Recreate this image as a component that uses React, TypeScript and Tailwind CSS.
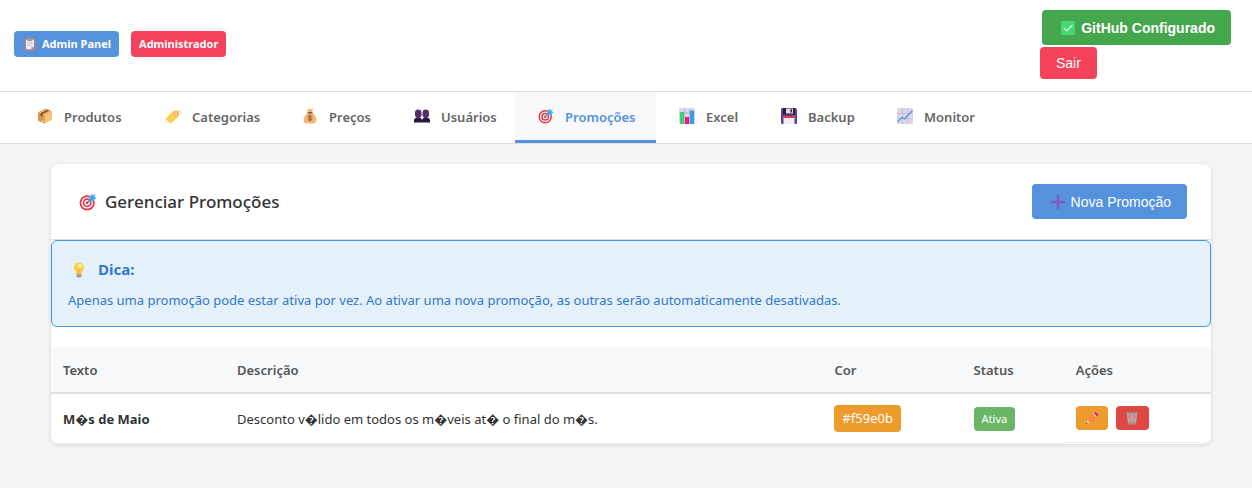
import type { ReactNode } from "react";

type IconProps = { className?: string };

function Svg({ className = "size-4", children }: { className?: string; children: ReactNode }) {
  return (
    <svg viewBox="0 0 32 32" className={`${className} shrink-0`} fill="none" aria-hidden="true">
      {children}
    </svg>
  );
}

const Clipboard = ({ className }: IconProps) => (
  <Svg className={className}>
    <rect x="4" y="3" width="24" height="28" rx="2" fill="#b5846c" />
    <path d="M7 6h18v16l-6 6H7z" fill="#f3eef8" />
    <path d="M25 22h-6v6z" fill="#b8a8cc" />
    <path d="M10 12h12M10 16h12M10 20h8" stroke="#b9b0c6" strokeWidth="1.6" />
    <path d="M11 4h3a2 2 0 0 1 4 0h3v5H11z" fill="#9b9b9b" />
  </Svg>
);

const Check = ({ className }: IconProps) => (
  <Svg className={className}>
    <rect x="0" y="0" width="32" height="32" rx="3" fill="#46d873" />
    <path d="M7 16.5l6 6L25.5 10" stroke="#fff" strokeWidth="2.6" strokeLinecap="round" strokeLinejoin="round" />
  </Svg>
);

const Box = ({ className }: IconProps) => (
  <Svg className={className}>
    <path d="M2 9L17 1l13 6v16L15 31 2 25z" fill="#e7a55a" />
    <path d="M15 14L30 7v16l-15 8z" fill="#f8c67b" />
    <path d="M2 9l13 5v17L2 25z" fill="#df9650" />
    <path d="M2 9L17 1l13 6-15 7z" fill="#f2b66b" />
    <path d="M7 10.500L21 3l4 2-14 7.500v5l-4-1.600z" fill="#855043" />
    <path d="M10 25l3 1v2l-3-1z" fill="#fff" />
  </Svg>
);

const Tag = ({ className }: IconProps) => (
  <Svg className={className}>
    <path d="M23 9c2-5 8-5 8-1 0 4-3 7-7 9" stroke="#d8d8d8" strokeWidth="1.600" />
    <path d="M2 20L16 6c1-1 2-1 3-1h6c2 0 3 1 3 3v5c0 2 0 3-2 5L13 30c-1 1-2 1-3 0l-8-7c-1-1-1-2 0-3z" fill="#f9d052" />
    <circle cx="22" cy="11" r="4" fill="#f29167" />
    <circle cx="22" cy="11" r="2" fill="#fff" />
  </Svg>
);

const MoneyBag = ({ className }: IconProps) => (
  <Svg className={className}>
    <path d="M10 1l4 2 2-2 2 2 4-2-2 8h-8z" fill="#edb777" />
    <path d="M12 10h8c6 4 9 9 9 14 0 5-3 7-7 7H10c-4 0-7-2-7-7 0-5 3-10 9-14z" fill="#f0bb77" />
    <path d="M11 8h10v3H11z" fill="#8c5543" />
    <circle cx="16" cy="20" r="7" fill="#e6a662" />
    <path d="M19 17c-1-2-6-2-6 .5 0 3 6 1.500 6 4.500 0 2.500-5 2.500-6 .4M16 13.500v13" stroke="#85503f" strokeWidth="1.800" />
  </Svg>
);

const Users = ({ className }: IconProps) => (
  <Svg className={className}>
    <path d="M7 16h4v5H7zM21 16h4v5h-4z" fill="#3d2250" />
    <path d="M0 29v-4c0-4 3-6 8-6s8 2 8 6c0-4 3-6 8-6s8 2 8 6v4z" fill="#2b173b" />
    <path d="M2 10c0-5 2-7 6.500-7S15 5 15 10v4c0 4-3 6-6.500 6S2 18 2 14z" fill="#523064" />
    <path d="M17 10c0-5 2-7 6.500-7S30 5 30 10v4c0 4-3 6-6.500 6S17 18 17 14z" fill="#523064" />
  </Svg>
);

const Target = ({ className }: IconProps) => (
  <Svg className={className}>
    <circle cx="14.500" cy="17.500" r="13.500" fill="#ee3346" />
    <circle cx="14.500" cy="17.500" r="10.500" fill="#fff" />
    <circle cx="14.500" cy="17.500" r="8" fill="#ee3346" />
    <circle cx="14.500" cy="17.500" r="5" fill="#fff" />
    <circle cx="14.500" cy="17.500" r="2.500" fill="#ee3346" />
    <path d="M15 17l10-10" stroke="#2876b9" strokeWidth="2" strokeLinecap="round" />
    <path d="M18 13l1-7 5-5 1 5 6 2-5 6-7 1z" fill="#45b4f4" />
    <path d="M19 13L29 3" stroke="#2492dc" strokeWidth="1.800" />
  </Svg>
);

const BarChart = ({ className }: IconProps) => (
  <Svg className={className}>
    <rect x="0" y="0" width="32" height="32" rx="3" fill="#ddd5e8" />
    <path d="M0 10h32M0 21h32M11 0v32M21 0v32" stroke="#b8a9ca" strokeWidth="1.500" />
    <path d="M2 8h8v24H2z" fill="#44d174" />
    <path d="M12 18h8v14h-8z" fill="#ef168d" />
    <path d="M22 5h8v27h-8z" fill="#389fe0" />
  </Svg>
);

const Floppy = ({ className }: IconProps) => (
  <Svg className={className}>
    <path d="M0 3q0-3 3-3h26l3 3v26q0 3-3 3H3q-3 0-3-3z" fill="#5b438d" />
    <path d="M4 0h24v13H4z" fill="#291d40" />
    <path d="M10 1h14v10H10z" fill="#ded8e7" />
    <path d="M19 2.500h3V9h-3z" fill="#37234e" />
    <path d="M5 17h22v15H5z" fill="#f1edf5" />
    <path d="M5 16h22v4H5z" fill="#ed3349" />
  </Svg>
);

const LineChart = ({ className }: IconProps) => (
  <Svg className={className}>
    <rect x="0" y="0" width="32" height="32" rx="3" fill="#ded5e9" />
    <path d="M0 11h32M0 21h32M11 0v32M21 0v32" stroke="#c1b4d0" strokeWidth="1.500" />
    <path d="M1 28l9-9 5 3L31 5" stroke="#35a0e3" strokeWidth="2.400" />
  </Svg>
);

const Plus = ({ className }: IconProps) => (
  <Svg className={className}>
    <path d="M16 3v26M3 16h26" stroke="#8057c4" strokeWidth="6" strokeLinecap="round" />
  </Svg>
);

const Bulb = ({ className }: IconProps) => (
  <Svg className={className}>
    <path d="M6 11C6 5 10 1 16 1s10 4 10 10c0 6-4 7-5 13H11C10 18 6 17 6 11z" fill="#fbcf48" />
    <ellipse cx="18" cy="8" rx="5" ry="4" fill="#fff1a5" />
    <path d="M13 14l3 2 3-2M16 16v8" stroke="#ea9e35" strokeWidth="1.500" />
    <path d="M11 24h10v5l-3 2h-4l-3-2z" fill="#939393" />
    <path d="M11 27h10" stroke="#c8c8c8" />
  </Svg>
);

const Pencil = ({ className }: IconProps) => (
  <Svg className={className}>
    <path d="M2 30l3-10 7 7z" fill="#f4c8a0" />
    <path d="M2 30l1-4 3 3z" fill="#573947" />
    <path d="M5 20L19 6l7 7-14 14z" fill="#fb8043" />
    <path d="M8 23L22 9" stroke="#ff9b62" strokeWidth="2" />
    <path d="M18 7l3-3 7 7-3 3z" fill="#d7d2dc" />
    <path d="M20 5c3-6 14 3 9 8z" fill="#ee235f" />
  </Svg>
);

const Trash = ({ className }: IconProps) => (
  <Svg className={className}>
    <path d="M4 5h24l-3 25H7z" fill="#b3a4a6" />
    <path d="M8 9h16l-2 18H10z" fill="#ca7174" />
    <path d="M8 10l14 16M13 9l10 12M8 18l9 9M24 10L10 26M19 9L9 21M24 18l-9 9" stroke="#cfc0c2" strokeWidth="1.600" />
    <path d="M3 3h26v4H3zM7 27h18v3H7z" fill="#999092" />
  </Svg>
);

const tabs = [
  { label: "Produtos", Icon: Box, width: "w-32" },
  { label: "Categorias", Icon: Tag, width: "w-[137px]" },
  { label: "Preços", Icon: MoneyBag, width: "w-28" },
  { label: "Usuários", Icon: Users, width: "w-[124px]" },
  { label: "Promoções", Icon: Target, width: "w-[141px]", active: true },
  { label: "Excel", Icon: BarChart, width: "w-[102px]" },
  { label: "Backup", Icon: Floppy, width: "w-[116px]" },
  { label: "Monitor", Icon: LineChart, width: "w-[122px]" },
];

export default function App() {
  return (
    <div className="min-h-screen bg-[#f4f4f4] font-['Noto_Sans','Open_Sans',sans-serif] text-[13px] leading-5 text-[#333]">
      <header className="flex items-center justify-between border-b border-[#dfdfdf] bg-white pt-2.5 pr-[21px] pb-3 pl-3.5">
        <div className="flex gap-3 pb-px text-[11px] leading-[18px] font-bold text-white">
          <span className="flex items-center gap-1 rounded bg-[#5592de] px-2 py-1">
            <span className="flex w-4 justify-center">
              <Clipboard className="size-3.5" />
            </span>
            Admin Panel
          </span>
          <span className="rounded bg-[#f4425b] px-2 py-1">Administrador</span>
        </div>
        <div className="flex w-[191px] flex-col items-start gap-0.5 font-['Liberation_Sans',Arial,sans-serif] text-white">
          <button className="flex h-[35px] items-center gap-1.5 self-end rounded bg-[#45a74d] pr-4 pl-[19px] text-sm font-bold whitespace-nowrap">
            <Check className="size-3.5" />
            GitHub Configurado
          </button>
          <button className="h-8 rounded bg-[#f4425b] px-4 text-sm">Sair</button>
        </div>
      </header>

      <nav className="flex border-b border-[#dfdfdf] bg-white pl-3.5">
        {tabs.map(({ label, Icon, width, active }) => (
          <a
            key={label}
            href={`#${label}`}
            aria-current={active ? "page" : undefined}
            className={`flex h-[51px] shrink-0 items-center gap-2 border-b-3 pt-0.5 pl-5 font-semibold whitespace-nowrap ${width} ${
              active ? "border-[#5592de] bg-[#f8f9fb] text-[#5592de]" : "border-transparent text-[#666]"
            }`}
          >
            <span className="flex w-[22px] justify-center pb-0.5">
              <Icon />
            </span>
            {label}
          </a>
        ))}
      </nav>

      <main className="pt-5 pr-[41px] pb-11 pl-[51px]">
        <section className="overflow-hidden rounded-lg bg-white shadow-[0_1px_4px_rgba(0,0,0,0.12)]">
          <div className="flex items-center justify-between border-b border-[#dfdfdf] px-6 py-5">
            <h1 className="flex items-center gap-2 text-[17px] leading-6 font-medium">
              <span className="flex w-[22px] justify-end">
                <Target className="size-[18px]" />
              </span>
              Gerenciar Promoções
            </h1>
            <button className="flex h-[35px] items-center gap-1.5 rounded bg-[#5592de] pr-4 pl-[19px] font-['Liberation_Sans',Arial,sans-serif] text-sm text-white">
              <Plus className="size-3.5" />
              Nova Promoção
            </button>
          </div>

          <div className="mb-5 rounded-md border border-[#4299e1] bg-[#e4f0fa] p-4 text-[#3178cd]">
            <h2 className="mb-2 flex items-center gap-2 text-[15px] leading-[25px] font-bold">
              <span className="flex w-[22px] justify-center">
                <Bulb />
              </span>
              Dica:
            </h2>
            <p>
              Apenas uma promoção pode estar ativa por vez. Ao ativar uma nova promoção, as outras serão
              automaticamente desativadas.
            </p>
          </div>

          <table className="w-full table-fixed border-separate border-spacing-0 text-left">
            <colgroup>
              <col className="w-[15%]" />
              <col className="w-[51.5%]" />
              <col className="w-[12%]" />
              <col className="w-[8.8%]" />
              <col />
            </colgroup>
            <thead className="bg-[#f8f9fb] text-[#555]">
              <tr>
                {["Texto", "Descrição", "Cor", "Status", "Ações"].map((h) => (
                  <th key={h} scope="col" className="h-[47px] border-b-2 border-[#dfdfdf] px-3 font-semibold">
                    {h}
                  </th>
                ))}
              </tr>
            </thead>
            <tbody>
              <tr>
                <td className="h-[50px] border-b border-[#eee] px-3 font-bold">M{"\uFFFD"}s de Maio</td>
                <td className="border-b border-[#eee] px-3">
                  Desconto v{"\uFFFD"}lido em todos os m{"\uFFFD"}veis at{"\uFFFD"} o final do m{"\uFFFD"}s.
                </td>
                <td className="border-b border-[#eee] px-3">
                  <span className="inline-block rounded bg-[#ed9b2d] px-2 py-[3px] leading-[21px] text-white">
                    #f59e0b
                  </span>
                </td>
                <td className="border-b border-[#eee] px-3">
                  <span className="inline-block rounded bg-[#69b765] px-2 py-[3px] text-[11px] leading-[18px] text-white">
                    Ativa
                  </span>
                </td>
                <td className="flex h-[49px] items-center gap-2 border-b border-[#eee] px-3">
                  <button aria-label="Editar" className="flex h-6 w-8 items-center justify-center rounded bg-[#ed9b2d]">
                    <Pencil className="size-3.5" />
                  </button>
                  <button aria-label="Excluir" className="flex h-6 w-[33px] items-center justify-center rounded bg-[#df4742]">
                    <Trash className="size-3.5" />
                  </button>
                </td>
              </tr>
            </tbody>
          </table>
        </section>
      </main>
    </div>
  );
}
